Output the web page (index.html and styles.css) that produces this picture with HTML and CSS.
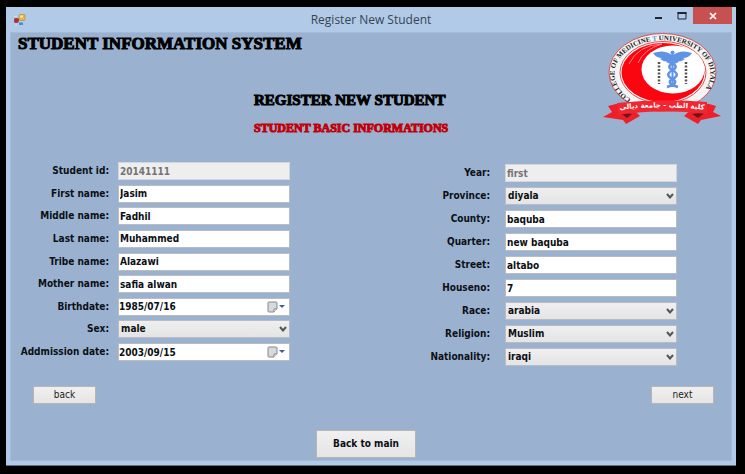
FILE: index.html
```
<!DOCTYPE html>
<html lang="en">
<head>
<meta charset="utf-8">
<title>Register New Student</title>
<link rel="stylesheet" href="styles.css">
</head>
<body>
<div class="window">
  <header class="titlebar">
    <svg class="app-icon" viewBox="0 0 12 12" aria-hidden="true">
      <rect x="5" y="0.5" width="6" height="6" rx="1" fill="#e8b64c" stroke="#b98a3a" stroke-width=".7"/>
      <rect x="6" y="1.500" width="3" height="2" fill="#fbe3a0"/>
      <rect x="0.500" y="4.500" width="4" height="4" rx=".5" fill="#c2262c" stroke="#8d2a2a" stroke-width=".6"/>
      <rect x="4.500" y="8" width="5" height="3.500" rx=".5" fill="#4d8be0" stroke="#cfe2fa" stroke-width=".6"/>
      <path d="M0 2.500h3M1 11h2" stroke="#e5d9cf"/>
    </svg>
    <span class="caption">Register New Student</span>
    <div class="controls">
      <button class="ctl" aria-label="Minimize"><svg viewBox="0 0 10 10"><path d="M1 7h7" stroke="#1d2733" stroke-width="2"/></svg></button>
      <button class="ctl" aria-label="Maximize"><svg viewBox="0 0 10 10"><path d="M1 1.500h8v6.500H1z" fill="none" stroke="#1d2733"/><path d="M.5 2h9" stroke="#1d2733" stroke-width="2"/></svg></button>
      <button class="ctl close" aria-label="Close"><svg viewBox="0 0 10 10"><path d="M2 2l6 6M8 2L2 8" stroke="#fff" stroke-width="1.700"/></svg></button>
    </div>
  </header>
  <main class="client">
    <div class="banner">
      <div class="headings">
        <h1>STUDENT INFORMATION SYSTEM</h1>
        <div class="subheads">
          <h2>REGISTER NEW STUDENT</h2>
          <h3>STUDENT BASIC INFORMATIONS</h3>
        </div>
      </div>
      <svg class="logo" viewBox="0 0 119 93" role="img" aria-label="College of Medicine, University of Diyala">
        <defs>
          <path id="ring" d="M29 66A48 33.500 0 1 1 92 66"/>
          <path id="band" d="M5 78Q60 71 115 78"/>
        </defs>
        <ellipse cx="60.500" cy="39.500" rx="53.500" ry="39" fill="#f4f4f4" stroke="#d8525a"/>
        <ellipse cx="61" cy="39.500" rx="43" ry="31" fill="#fff" stroke="#e84a50"/>
        <ellipse cx="61" cy="39.500" rx="41.500" ry="29.500" fill="#fb0510"/>
        <path d="M27 31Q36 12 60 11Q42 16 36 30" fill="none" stroke="#ff8288"/>
        <ellipse cx="71" cy="36.500" rx="31.500" ry="24" fill="#fff"/>
        <text class="ring-text"><textPath href="#ring">COLLEGE OF MEDICINE <tspan fill="#5b8fd8">T</tspan> UNIVERSITY OF DIYALA</textPath></text>
        <g fill="#5e93e6">
          <path d="M70 22Q62 16 51 20Q54 25 60 25L58 26Q63 30 70 28z"/>
          <path d="M71 22Q79 16 90 20Q87 25 81 25L83 26Q78 30 71 28z"/>
          <circle cx="70.500" cy="19.500" r="2"/>
          <path d="M69.500 20h2v34h-2z"/>
        </g>
        <path d="M65 28Q79 33 70.500 37Q62 42 70.500 46Q78 50 65 54M76 28Q62 33 70.500 37Q79 42 70.500 46Q63 50 76 54" fill="none" stroke="#5e93e6" stroke-width="2.500"/>
        <path d="M57 29v22M84 29v22" stroke="#555" stroke-width="2.500" stroke-dasharray="2 1.500"/>
        <path d="M14 71L25 70L38 83L24 91L21 87L1 84L10 79L6 73z" fill="#ed2029"/>
        <path d="M107 71L96 70L82 83L96 91L99 87L119 83L111 79L114 73z" fill="#ed2029"/>
        <path d="M17 79L30 81L25 85z" fill="#711318"/>
        <path d="M104 79L90 81L96 85z" fill="#711318"/>
        <path d="M15 70Q60 65 105 69V81Q60 75 16 82z" fill="#f22630"/>
        <text class="band-text" direction="rtl"><textPath href="#band" startOffset="50%">كلية الطب - جامعة ديالى</textPath></text>
      </svg>
    </div>
    <form class="form">
      <div class="fields left">
        <label for="sid">Student id:</label><input id="sid" value="20141111" disabled>
        <label for="fn">First name:</label><input id="fn" value="Jasim">
        <label for="mn">Middle name:</label><input id="mn" value="Fadhil">
        <label for="ln">Last name:</label><input id="ln" value="Muhammed">
        <label for="tn">Tribe name:</label><input id="tn" value="Alazawi">
        <label for="mo">Mother name:</label><input id="mo" value="safia alwan">
        <label for="bd">Birthdate:</label>
        <div class="combo"><input id="bd" class="date" value="1985/07/16"><svg class="cal" viewBox="0 0 19 12"><path d="M2 1h7q1 0 1 1v6l-3 3H2q-1 0-1-1V2q0-1 1-1z" fill="#d5dae1" stroke="#8d8584"/><path d="M10 8H7v3" fill="#fff" stroke="#8d8584"/><path d="M12 4h6l-3 3z" fill="#3b5f8f"/></svg></div>
        <label for="sx">Sex:</label>
        <div class="combo"><select id="sx"><option>male</option></select><svg class="arrow" viewBox="0 0 8 6"><path d="M1 1l3 3.500L7 1" /></svg></div>
        <label for="ad">Addmission date:</label>
        <div class="combo"><input id="ad" class="date" value="2003/09/15"><svg class="cal" viewBox="0 0 19 12"><path d="M2 1h7q1 0 1 1v6l-3 3H2q-1 0-1-1V2q0-1 1-1z" fill="#d5dae1" stroke="#8d8584"/><path d="M10 8H7v3" fill="#fff" stroke="#8d8584"/><path d="M12 4h6l-3 3z" fill="#3b5f8f"/></svg></div>
      </div>
      <div class="fields right">
        <label for="yr">Year:</label><input id="yr" value="first" disabled>
        <label for="pr">Province:</label>
        <div class="combo"><select id="pr"><option>diyala</option></select><svg class="arrow" viewBox="0 0 8 6"><path d="M1 1l3 3.500L7 1" /></svg></div>
        <label for="co">County:</label><input id="co" value="baquba">
        <label for="qu">Quarter:</label><input id="qu" value="new baquba">
        <label for="st">Street:</label><input id="st" value="altabo">
        <label for="ho">Houseno:</label><input id="ho" value="7">
        <label for="ra">Race:</label>
        <div class="combo"><select id="ra"><option>arabia</option></select><svg class="arrow" viewBox="0 0 8 6"><path d="M1 1l3 3.500L7 1" /></svg></div>
        <label for="re">Religion:</label>
        <div class="combo"><select id="re"><option>Muslim</option></select><svg class="arrow" viewBox="0 0 8 6"><path d="M1 1l3 3.500L7 1" /></svg></div>
        <label for="na">Nationality:</label>
        <div class="combo"><select id="na"><option>iraqi</option></select><svg class="arrow" viewBox="0 0 8 6"><path d="M1 1l3 3.500L7 1" /></svg></div>
      </div>
    </form>
    <nav class="pager">
      <button class="btn">back</button>
      <button class="btn">next</button>
    </nav>
    <button class="btn home">Back to main</button>
  </main>
</div>
</body>
</html>
```
FILE: styles.css
```
* { box-sizing: border-box; }
body {
  margin: 0;
  min-height: 100vh;
  padding: 7px 9px 8px 6px;
  background: #000;
  display: flex;
  font: bold 10px/14px "DejaVu Sans Condensed", "DejaVu Sans", sans-serif;
  color: #0c0f14;
}
.window {
  flex: 1;
  display: flex;
  flex-direction: column;
  padding: 0 4px 4px;
  background: #b0cae8;
  border-bottom: 1px solid #5e7188;
}
.titlebar {
  display: grid;
  grid-template-columns: 1fr auto 1fr;
  align-items: center;
  height: 25px;
}
.app-icon { width: 12px; height: 12px; margin-left: 4px; }
.caption { font: 12px/16px "Open Sans", sans-serif; color: #3a4450; }
.controls { display: flex; justify-content: flex-end; align-self: start; }
.ctl {
  width: 23px;
  height: 17px;
  padding: 0;
  border: 0;
  background: none;
  display: grid;
  place-items: center;
}
.ctl svg { width: 10px; height: 10px; }
.close { width: 39px; background: #c75050; }
.client {
  flex: 1;
  display: flex;
  flex-direction: column;
  background: #9ab2d0;
  border: 1px solid #a3bbd8;
}
.banner { display: flex; justify-content: space-between; height: 93px; padding: 0 10px 0 7px; }
h1, h2, h3 {
  margin: 0;
  font-family: "Liberation Serif", serif;
  font-weight: bold;
  color: #000;
  white-space: nowrap;
  -webkit-text-stroke: 1px currentColor;
}
h1 { font-size: 17px; line-height: 22px; }
.subheads { padding: 34px 0 0 236px; }
h2 { font-size: 15px; line-height: 22px; }
h3 { font-size: 12px; line-height: 16px; margin-top: 9px; color: #c00008; }
.logo { width: 119px; height: 93px; flex: none; }
.ring-text { font: bold 7px "Liberation Serif", serif; fill: #222; }
.band-text { font: bold 7px "DejaVu Sans", sans-serif; fill: #fff; text-anchor: middle; }
.form {
  display: flex;
  justify-content: space-between;
  align-items: flex-start;
  padding: 36px 54px 0 8px;
}
.fields {
  display: grid;
  grid-template-columns: auto 172px;
  grid-auto-rows: 18px;
  align-content: space-between;
  align-items: center;
}
.fields label { text-align: right; white-space: nowrap; }
.left { grid-template-columns: 90px 172px; column-gap: 9px; height: 199px; }
.right { column-gap: 15px; row-gap: 5px; margin-top: 2px; }
input, select {
  display: block;
  width: 100%;
  height: 18px;
  margin: 0;
  padding: 0 1px;
  border: 1px solid #b9bcc2;
  border-radius: 0;
  background: #fff;
  color: inherit;
  font: inherit;
}
input:disabled { background: #eee; color: #747474; border-color: #d3d6db; }
select {
  appearance: none;
  padding: 0 2px;
  background: linear-gradient(#efefef, #e4e4e4);
}
.date { padding: 0; }
.combo { position: relative; }
.arrow { position: absolute; right: 3px; top: 6px; width: 8px; height: 6px; fill: none; stroke: #555; stroke-width: 2; pointer-events: none; }
.cal { position: absolute; right: 4px; top: 3px; width: 19px; height: 12px; }
.pager { display: flex; justify-content: space-between; padding: 20px 17px 0 22px; }
.btn {
  width: 63px;
  height: 18px;
  padding: 0;
  border: 1px solid #b5b5b5;
  background: linear-gradient(#f0f0f0, #e5e5e5);
  color: #222;
  font: 10px/14px "DejaVu Sans Condensed", "DejaVu Sans", sans-serif;
}
.home {
  align-self: center;
  width: 100px;
  height: 28px;
  margin: 26px 10px 2px 0;
  color: #0c0f14;
  font-weight: bold;
}
```
